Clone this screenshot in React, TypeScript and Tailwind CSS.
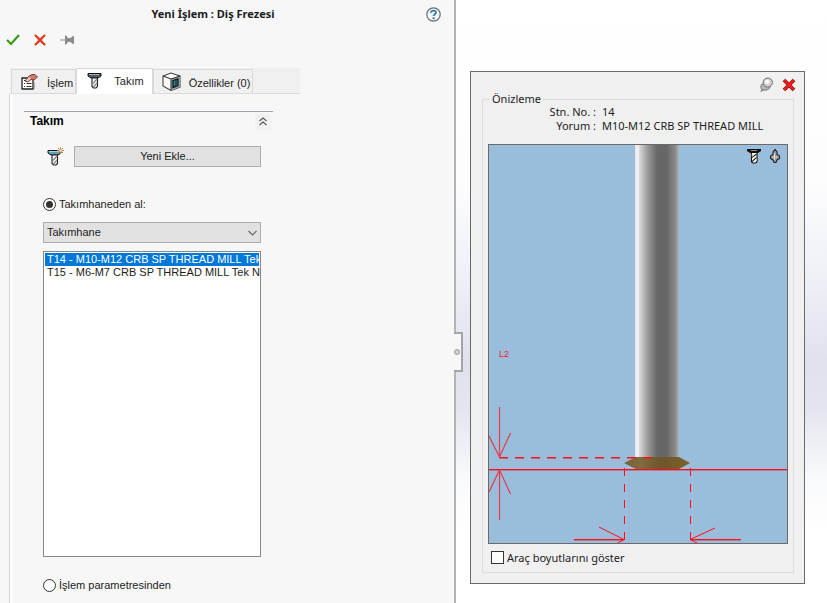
import type { ReactNode } from "react";

const sans = "font-['Liberation_Sans',Arial,sans-serif]";
const humanist = "font-['Noto_Sans','Open_Sans',sans-serif]";

function CheckIcon() {
  return (
    <svg width="14" height="12" viewBox="0 0 14 12" aria-hidden="true">
      <path d="M1 6l4 4 8-9" fill="none" stroke="#389a1a" strokeWidth="2.2" />
    </svg>
  );
}

function CrossIcon() {
  return (
    <svg width="12" height="12" viewBox="0 0 12 12" aria-hidden="true">
      <path d="M1 1l10 10M11 1L1 11" fill="none" stroke="#e0310f" strokeWidth="2.2" />
    </svg>
  );
}

function PushpinIcon() {
  return (
    <svg width="14" height="12" viewBox="0 0 14 12" aria-hidden="true">
      <path d="M0 5.500h6v1H0z" fill="#8c8c8c" />
      <path d="M5 1.500h1.200l1.800 2.500h2.500l2.500-2h1v8h-1l-2.500-2H8L6.200 10.500H5z" fill="#8c8c8c" />
    </svg>
  );
}

function HelpIcon() {
  return (
    <svg width="15" height="15" viewBox="0 0 15 15" aria-hidden="true">
      <circle cx="7.500" cy="7.500" r="6.700" fill="#f6f8fa" stroke="#6a6f75" strokeWidth="1.200" />
      <path d="M5 5.700C5 2.900 10 2.900 10 5.600c0 1.600-2.400 1.700-2.400 3.500" fill="none" stroke="#2f7ca5" strokeWidth="1.800" />
      <rect x="6.600" y="10.300" width="2" height="1.900" fill="#2f7ca5" />
    </svg>
  );
}

function OperationIcon() {
  return (
    <svg width="19" height="16" viewBox="-1 0 19 16" aria-hidden="true">
      <path d="M1 4h11v11H1z" fill="#fff" stroke="#222" strokeWidth="1.300" />
      <path d="M3 6.500h1M3 9.500h1M3 12.500h1M5.500 9.500h5M5.500 12.500h5" stroke="#333" />
      <path d="M4 7l4-5 3-1.500h3L16.500 3 13 6l-3-.5L7 8z" fill="#cc7770" stroke="#5e2622" strokeWidth=".8" />
      <path d="M5 6.500l3-3.500 2 1-3 3.500z" fill="#f4d1c8" />
      <path d="M13 8v7" stroke="#777" />
    </svg>
  );
}

function ToolIcon({ sparkle = false }: { sparkle?: boolean }) {
  return (
    <svg width="17" height="19" viewBox="0 0 17 19" aria-hidden="true">
      <path d="M1 3.500h13V6l-3 2H4L1 6z" fill={sparkle ? "#5f9fb8" : "#555b5e"} stroke="#111" strokeWidth="1" />
      <path d="M2 4.500h10" stroke={sparkle ? "#9fd3e6" : "#a5afb2"} />
      <path d="M5 8h5.500v8.500L9 18H6.500L5 16.500z" fill="#f4f4f4" stroke="#222" strokeWidth="1.100" />
      <path d="M6 13.500l4-4.500M6.500 17l3.500-4" stroke="#888" strokeWidth="1.200" />
      {sparkle && (
        <>
          <path d="M13.500 0v7M10 3.500h7M11 1l5 5M16 1l-5 5" stroke="#bd7a3e" strokeWidth=".9" />
          <circle cx="13.500" cy="3.500" r="1.300" fill="#ffe6a8" />
        </>
      )}
    </svg>
  );
}

function CubeIcon() {
  return (
    <svg width="19" height="19" viewBox="0 0 19 19" aria-hidden="true">
      <path d="M1 4l8-3 9 3v11l-9 3.500L1 14z" fill="#fafafa" stroke="#444" strokeWidth="1.100" />
      <path d="M9 7l9-3v11l-9 3.500z" fill="#9aa3a4" />
      <path d="M1 4l8 3 9-3M9 7v11" fill="none" stroke="#333" strokeWidth="1.100" />
      <path d="M11 8.500l5-1.700v6.700l-5 2z" fill="#2f8587" stroke="#111" strokeWidth="1.200" />
      <path d="M11.500 15l2.500-2.500V8" fill="none" stroke="#123" />
    </svg>
  );
}

function CollapseIcon() {
  return (
    <svg width="8" height="9" viewBox="0 0 8 9" aria-hidden="true">
      <path d="M.5 4L4 1l3.500 3M.5 8L4 5l3.500 3" fill="none" stroke="#555" strokeWidth="1.100" />
    </svg>
  );
}

function UnpinIcon() {
  return (
    <svg width="15" height="16" viewBox="0 0 15 16" aria-hidden="true">
      <path d="M2 14.500L5 11" stroke="#777" strokeWidth="1.500" />
      <path d="M3 7c-2 2-1 5 0 5.500 3 1.500 7 .5 8.500-3z" fill="#b5b5b5" stroke="#777" />
      <ellipse cx="8.800" cy="5.500" rx="4.700" ry="4.500" fill="#d0d0d0" stroke="#707070" />
      <ellipse cx="8.300" cy="4.800" rx="2.300" ry="2.100" fill="#fff" />
    </svg>
  );
}

function CloseIcon() {
  return (
    <svg width="14" height="14" viewBox="0 0 14 14" aria-hidden="true">
      <path d="M2 2l10 10M12 2L2 12" stroke="#8d1010" strokeWidth="3.800" />
      <path d="M2.400 2.400l9.200 9.200M11.600 2.400l-9.200 9.200" stroke="#f02020" strokeWidth="2.200" />
    </svg>
  );
}

function CutterIcon() {
  return (
    <svg width="14" height="16" viewBox="0 0 14 16" aria-hidden="true">
      <path d="M0 1h14v2l-3 2H3L0 3z" fill="#111" />
      <path d="M4 2.500h6" stroke="#888" />
      <path d="M4.500 4.500h5.500V14l-1.500 1H6l-1.500-1z" fill="#fff" stroke="#111" strokeWidth="1.100" />
      <path d="M5 9.500l4.500-3.500M5 13.500l4.500-4" stroke="#333" strokeWidth="1.200" />
      <path d="M5.200 6.500v2M9.300 10.500v2" stroke="#d8d02a" />
    </svg>
  );
}

function HolderIcon() {
  return (
    <svg width="12" height="16" viewBox="0 0 12 16" aria-hidden="true">
      <path d="M6 1.500L4 4v2.500L1.500 8v2.500L4 12l1 2.500h2L8 12l2.500-1.500V8L8 6.500V4z" fill="#9c9c9c" stroke="#222" strokeWidth="1.100" />
      <path d="M5.500 5v7M3.500 9h5" stroke="#d8d8d8" />
    </svg>
  );
}

function Tab({ icon, label, active = false }: { icon: ReactNode; label: string; active?: boolean }) {
  return (
    <button
      type="button"
      role="tab"
      aria-selected={active}
      className={
        active
          ? "-mb-px flex h-[26px] items-center gap-[10px] border border-b-0 border-[#d9d9d9] bg-white pr-2 pb-1 pl-[10px]"
          : "flex h-6 items-center gap-2 border border-b-0 border-[#d9d9d9] bg-[#f0f0f0] pr-0.5 pl-2"
      }
    >
      {icon}
      <span className="pt-[3px] whitespace-nowrap">{label}</span>
    </button>
  );
}

function Radio({ label, checked = false }: { label: string; checked?: boolean }) {
  return (
    <label className="flex h-4 items-center gap-[3px]">
      <input
        type="radio"
        name="source"
        defaultChecked={checked}
        className="grid size-[13px] shrink-0 appearance-none place-items-center rounded-full border border-[#333] bg-white before:size-[7px] before:rounded-full before:content-[''] checked:before:bg-[#333]"
      />
      {label}
    </label>
  );
}

function PropertyPanel() {
  return (
    <aside className={`${sans} relative w-[456px] shrink-0 border-r-2 border-[#b4b4b4] bg-[#f7f7f7] text-[11px] leading-[13px] text-[#1c1c1c]`}>
      <header className={`${humanist} flex items-center pt-1.5 pr-[13px]`}>
        <h1 className="flex-1 text-center text-[11px] leading-4 font-bold">Yeni İşlem : Diş Frezesi</h1>
        <button type="button" aria-label="Yardım">
          <HelpIcon />
        </button>
      </header>
      <div className="mt-[10px] flex h-4 items-center gap-[14px] pl-1.5">
        <button type="button" aria-label="Tamam">
          <CheckIcon />
        </button>
        <button type="button" aria-label="İptal">
          <CrossIcon />
        </button>
        <button type="button" aria-label="Sabitle">
          <PushpinIcon />
        </button>
      </div>

      <div role="tablist" className="mt-5 mr-[154px] ml-[10px] flex h-[26px] items-end border-b border-[#dcdcdc] bg-[#f0f0f0] pl-px">
        <Tab icon={<OperationIcon />} label="İşlem" />
        <Tab icon={<ToolIcon />} label="Takım" active />
        <Tab icon={<CubeIcon />} label="Özellikler (0)" />
      </div>

      <section className="ml-[9px] border-l border-[#d4d4d4]">
        <div className="border-l-[3px] border-white pt-[17px] pr-[181px] pb-[10px] pl-[11px]">
          <div className="flex h-5 items-center justify-between border-t border-[#a0a0ac] pr-0.5 pl-1.5">
            <h2 className="text-[12px] font-bold text-black">Takım</h2>
            <button type="button" aria-label="Daralt" className="flex size-4 items-center justify-center bg-[#f1f1f1]">
              <CollapseIcon />
            </button>
          </div>

          <div className="pr-3 pl-[19px]">
            <div className="mt-[15px] flex items-center gap-[10px] pl-1">
              <ToolIcon sparkle />
              <button type="button" className="h-[21px] flex-1 border border-[#adadad] bg-[#e1e1e1]">
                Yeni Ekle...
              </button>
            </div>

            <div className="mt-[29px]">
              <Radio label="Takımhaneden al:" checked />
            </div>

            <div className="relative mt-[10px]">
              <select aria-label="Takımhane" className="block h-[21px] w-full appearance-none border border-[#adadad] bg-[#e1e1e1] px-[3px]">
                <option>Takımhane</option>
              </select>
              <svg width="9" height="6" viewBox="0 0 9 6" className="pointer-events-none absolute top-2 right-1" aria-hidden="true">
                <path d="M.5 1l4 4 4-4" fill="none" stroke="#666" strokeWidth="1.200" />
              </svg>
            </div>

            <select
              size={2}
              aria-label="Takımlar"
              defaultValue="T14"
              className="mt-2 block h-[306px] w-full appearance-none overflow-hidden border border-[#828790] bg-white p-px"
            >
              <option value="T14" className="h-[13px] min-h-0 p-0 pl-0.5 leading-[13px] checked:bg-[linear-gradient(#0078d7,#0078d7)] checked:text-white">
                T14 - M10-M12 CRB SP THREAD MILL Tek Nokta
              </option>
              <option value="T15" className="h-[13px] min-h-0 p-0 pl-0.5 leading-[13px]">
                T15 - M6-M7 CRB SP THREAD MILL Tek Nokta
              </option>
            </select>

            <div className="mt-5">
              <Radio label="İşlem parametresinden" />
            </div>
          </div>
        </div>
      </section>

      <button
        type="button"
        aria-label="Paneli gizle"
        className="absolute top-[332px] -right-[9px] flex h-10 w-[9px] items-center border-y-2 border-r-2 border-[#a5a5a5] bg-[#f7f7f7]"
      >
        <span className="size-1.5 shrink-0 rounded-full border border-[#999] bg-[#d4d4d4]" />
      </button>
    </aside>
  );
}

function ToolDrawing() {
  return (
    <svg viewBox="0 0 298 398" className="block w-full" role="img" aria-label="Takım önizlemesi">
      <defs>
        <linearGradient id="shank">
          <stop offset="0" stopColor="#e4e4e4" />
          <stop offset=".06" stopColor="#f4f4f4" />
          <stop offset=".12" stopColor="#d2d2d2" />
          <stop offset=".3" stopColor="#969696" />
          <stop offset=".5" stopColor="#686868" />
          <stop offset=".72" stopColor="#666" />
          <stop offset=".92" stopColor="#8c8c8c" />
          <stop offset="1" stopColor="#b5b5b5" />
        </linearGradient>
        <linearGradient id="insert">
          <stop offset="0" stopColor="#766033" />
          <stop offset=".25" stopColor="#816b41" />
          <stop offset=".55" stopColor="#6c562b" />
          <stop offset="1" stopColor="#7d612b" />
        </linearGradient>
      </defs>
      <rect x="146" width="44" height="312" fill="url(#shank)" />
      <path d="M135 318l12-6h43l11 6-11 6h-43z" fill="url(#insert)" />
      <g fill="#ff0f1a">
        <rect y="324" width="298" height="1.400" />
        <rect x="85" y="394" width="50" height="1.400" />
        <rect x="202" y="394" width="50" height="1.400" />
      </g>
      <g fill="none" stroke="#ff0f1a">
        <path d="M10 312.700h153" strokeWidth="1.400" strokeDasharray="9 7" />
        <path d="M135.500 323v72M201.500 323v72" strokeDasharray="8 8" />
        <path d="M110 382l25 12.500-7 4M226 383l-25 11.500 8 4" />
      </g>
      <g fill="none" stroke="#e53d4e" strokeWidth="1.200">
        <path d="M10.500 262v50M0 291l10.500 21L21.500 288" />
        <path d="M10.500 375v-50M0 347l10.500-22 11 24" />
      </g>
      <text x="10" y="212" fill="#f01c2c" fontSize="9" fontFamily="Liberation Sans, Arial, sans-serif">
        L2
      </text>
    </svg>
  );
}

function PreviewWindow() {
  return (
    <section className={`${humanist} mt-[71px] mr-[22px] ml-[14px] border border-[#6a6a6a] bg-[#f0f0f0] pt-1 pr-[10px] pb-[10px] pl-[11px] text-[11px] leading-[14px] text-[#1c1c1c]`}>
      <div className="-mr-0.5 flex h-[18px] items-center justify-end gap-2">
        <button type="button" aria-label="Sabitlemeyi kaldır">
          <UnpinIcon />
        </button>
        <button type="button" aria-label="Kapat">
          <CloseIcon />
        </button>
      </div>
      <fieldset className="-mt-0.5 border border-[#dcdcdc] px-[5px] pb-[7px]">
        <legend className="ml-0.5 px-0.5">Önizleme</legend>
        <dl className="-mt-px grid grid-cols-[108px_1fr] gap-x-1.5">
          <dt className="text-right whitespace-nowrap">Stn. No. :</dt>
          <dd>14</dd>
          <dt className="text-right whitespace-nowrap">Yorum :</dt>
          <dd className="whitespace-nowrap">M10-M12 CRB SP THREAD MILL</dd>
        </dl>
        <div className="relative mt-[11px] border border-[#6a6a6a] bg-[#99bddb]">
          <ToolDrawing />
          <div className="absolute top-[3px] right-1.5 flex gap-2">
            <button type="button" aria-label="Takımı göster">
              <CutterIcon />
            </button>
            <button type="button" aria-label="Tutucuyu göster">
              <HolderIcon />
            </button>
          </div>
        </div>
        <label className="mt-1.5 ml-[3px] flex h-[15px] items-center gap-[3px]">
          <input type="checkbox" className="size-[13px] appearance-none border border-[#333] bg-white" />
          Araç boyutlarını göster
        </label>
      </fieldset>
    </section>
  );
}

export default function App() {
  return (
    <div className="flex min-h-screen bg-[linear-gradient(to_bottom,#ffffff_0%,#fdfdfe_30%,#eff1f7_45%,#dfe2ed_60%,#e3e6ef_68%,#f8f9fb_79%,#ffffff_88%)]">
      <PropertyPanel />
      <main className="min-w-0 flex-1">
        <PreviewWindow />
      </main>
    </div>
  );
}
